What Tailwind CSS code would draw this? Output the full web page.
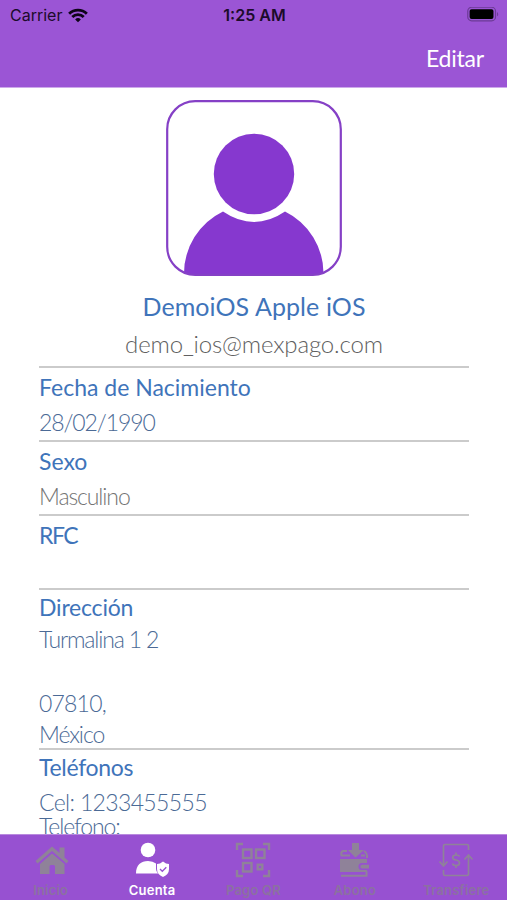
<!DOCTYPE html>
<html lang="es">
<head>
  <meta charset="UTF-8">
  <meta name="viewport" content="width=device-width, initial-scale=1.0">
  <title>Cuenta</title>
  <script src="https://cdn.jsdelivr.net/npm/@tailwindcss/browser@4"></script>
</head>
<body class="h-[900px] overflow-hidden flex flex-col bg-white font-['Lato',sans-serif]">
  <!-- Encabezado -->
  <header class="h-[88px] shrink-0 bg-[#9b55d5] border-b border-[#cdaaea]">
    <div class="h-[30px] pl-[10px] pr-[8px] grid grid-cols-3 items-center font-['Inter',sans-serif] text-[#1c0b2b]">
      <div class="flex items-center gap-[6px]">
        <span class="text-[16px]">Carrier</span>
        <svg class="w-[20px] h-[15px]" viewBox="0 0 21 15" fill="none" stroke="#0d0417" stroke-width="3">
          <path d="M1.2 5.6a13.3 13.3 0 0 1 18.6 0"/>
          <path d="M4.5 9a8.6 8.6 0 0 1 12 0"/>
          <path d="M10.5 14.6l-3-3a4.3 4.3 0 0 1 6 0z" fill="#0d0417" stroke="none"/>
        </svg>
      </div>
      <span class="text-center text-[16px] font-semibold">1:25 AM</span>
      <svg class="w-[32px] h-[16px] justify-self-end" viewBox="0 1 33 16">
        <rect x="0.8" y="1" width="28.6" height="14" rx="4" fill="none" stroke="#6c3b96" stroke-width="1.2"/>
        <rect x="2.7" y="3" width="24.6" height="10" rx="2" fill="#000"/>
        <path d="M31 5.8c1.6.8 1.6 3.6 0 4.4z" fill="#6c3b96"/>
      </svg>
    </div>
    <div class="h-[57px] pr-[23px] flex items-start justify-end">
      <span class="text-white text-[23px] tracking-[-0.2px] leading-[56px]">Editar</span>
    </div>
  </header>

  <main class="flex-1 min-h-0 overflow-hidden pl-[39px] pr-[38px] text-[23px] text-[#4b6a96]">
    <section class="h-[280px] border-b-2 border-[#cbcbcb] pt-[12px] flex flex-col items-center">
      <svg class="w-[176px] h-[176px] shrink-0" viewBox="0 0 176 176">
        <path d="M18 174A69 69 0 0 1 57 111.500Q88 132.500 119 111.500A69 69 0 0 1 157.500 174z" fill="#8638cf"/>
        <circle cx="88" cy="74" r="40.200" fill="#8638cf"/>
        <rect x="1.200" y="1.200" width="173.600" height="173.600" rx="28" fill="none" stroke="#8540c6" stroke-width="2.200"/>
      </svg>
      <h1 class="mt-[11px] text-[25px] tracking-[0.1px] leading-[38px] text-[#3f74ba] whitespace-nowrap">DemoiOS Apple iOS</h1>
      <p class="text-[24px] tracking-[-0.15px] leading-[37px] font-light text-[#606060] whitespace-nowrap">demo_ios@mexpago.com</p>
    </section>
    <section class="h-[74px] border-b-2 border-[#cbcbcb] pt-px">
      <h2 class="leading-[36px] text-[#3f74ba]">Fecha de Nacimiento</h2>
      <p class="leading-[35px] font-light tracking-[-1.1px]">28/02/1990</p>
    </section>
    <section class="h-[74px] border-b-2 border-[#cbcbcb] pt-px">
      <h2 class="leading-[36px] text-[#3f74ba]">Sexo</h2>
      <p class="leading-[35px] font-light text-[#747474] tracking-[-1.1px]">Masculino</p>
    </section>
    <section class="h-[74px] border-b-2 border-[#cbcbcb] pt-px">
      <h2 class="leading-[36px] text-[#3f74ba] tracking-[-1.5px]">RFC</h2>
    </section>
    <section class="h-[160px] border-b-2 border-[#cbcbcb]">
      <h2 class="leading-[34px] text-[#3f74ba] tracking-[-0.2px]">Dirección</h2>
      <p class="leading-[30px] font-light tracking-[-1.15px]">Turmalina 1 2</p>
      <p class="mt-[33px] leading-[32px] font-light tracking-[-0.8px]">07810,</p>
      <p class="leading-[31px] font-light tracking-[-1.1px]">México</p>
    </section>
    <section>
      <h2 class="leading-[34px] text-[#3f74ba] tracking-[-0.3px]">Teléfonos</h2>
      <p class="mt-[6px] leading-[24px] font-light tracking-[-0.65px]">Cel: 1233455555</p>
      <p class="leading-[24px] font-light tracking-[-1.1px]">Telefono:</p>
    </section>
  </main>

  <!-- Barra inferior -->
  <nav class="h-[66px] shrink-0 bg-[#9751d1] border-t border-[#b98ade] grid grid-cols-5 font-['Inter',sans-serif] text-[13px] leading-[16px] font-semibold tracking-[0.2px] text-[#8b71a0] text-center">
    <a class="flex flex-col items-center pt-[7px] gap-[4px]">
      <svg class="w-[36px] h-[36px]" viewBox="-1 0 36 36" fill="#8f8299">
        <path d="M18 4.500L25.500 11V5.500H30.500V15.500L34.500 19L32.500 21.500L18 9L3.500 21.500L1.500 19z"/>
        <path d="M18 11.500L30.500 22V32H21V24.500Q21 23 19.500 23H17Q15.500 23 15.500 24.500V32H6V22z"/>
      </svg>
      <span>Inicio</span>
    </a>
    <a class="flex flex-col items-center pt-[7px] gap-[4px] text-white">
      <svg class="w-[36px] h-[36px]" viewBox="0 0 36 36" fill="#fff">
        <circle cx="14" cy="8" r="7.300"/>
        <path d="M2 31.500C2 23 7 19 14 19Q19 19 22 21.500V27Q22 29.500 24 31.500z"/>
        <path d="M29 19.500Q32 22 35 22V27Q35 32.500 29 35Q23 32.500 23 27V22Q26 22 29 19.500z"/>
        <path d="M26 27l2.300 2.300 4-4" fill="none" stroke="#9751d1" stroke-width="1.300"/>
      </svg>
      <span>Cuenta</span>
    </a>
    <a class="flex flex-col items-center pt-[7px] gap-[4px]">
      <svg class="w-[36px] h-[36px]" viewBox="0 0 36 36" fill="none" stroke="#8f8299" stroke-width="2.400">
        <path d="M2 8V2H8M28 2H34V8M34 28V34H28M8 34H2V28"/>
        <rect x="8" y="7.500" width="8.500" height="8.500"/>
        <rect x="21" y="7.500" width="8.500" height="8.500"/>
        <rect x="8" y="21" width="8.500" height="8.500"/>
        <rect x="22.700" y="22.700" width="4.600" height="4.600"/>
      </svg>
      <span>Pago QR</span>
    </a>
    <a class="flex flex-col items-center pt-[7px] gap-[4px]">
      <svg class="w-[36px] h-[36px]" viewBox="-1 0 36 36" fill="#8f8299">
        <path d="M14 1H21V8H26L17.500 15.500L10 8H14z"/>
        <path d="M2 17H29V21H24Q20.500 21 20.500 24.500Q20.500 28 24 28H29V30H2z"/>
        <path d="M24 22.700H31V26.500H24Q22.400 26.500 22.400 24.600Q22.400 22.700 24 22.700z"/>
        <path d="M9 9H5Q2.500 10 3.500 13.500H12M23 13.500H27M26 9Q29.500 11 29 16M3 33.800H28.500V29" fill="none" stroke="#8f8299" stroke-width="2"/>
      </svg>
      <span>Abono</span>
    </a>
    <a class="flex flex-col items-center pt-[7px] gap-[4px]">
      <svg class="w-[36px] h-[36px]" viewBox="0 0 36 36" fill="none" stroke="#8f8299" stroke-width="1.700">
        <path d="M30.500 8V4Q30.500 2.500 29 2.500H7Q5.500 2.500 5.500 4V24M1.500 19.500L5.500 24L9.500 19.500"/>
        <path d="M5.500 28V32Q5.500 33.500 7 33.500H29Q30.500 33.500 30.500 32V13M26.500 17.500L30.500 13L34.500 17.500"/>
        <path d="M21.500 14.500Q21 13 18 13Q14.700 13 14.700 15.500Q14.700 17.500 18 18Q21.500 18.500 21.500 21Q21.500 23.500 18 23.500Q15 23.500 14.500 21.500M18 10.500V13M18 23.500V26"/>
      </svg>
      <span>Transfiere</span>
    </a>
  </nav>
</body>
</html>
